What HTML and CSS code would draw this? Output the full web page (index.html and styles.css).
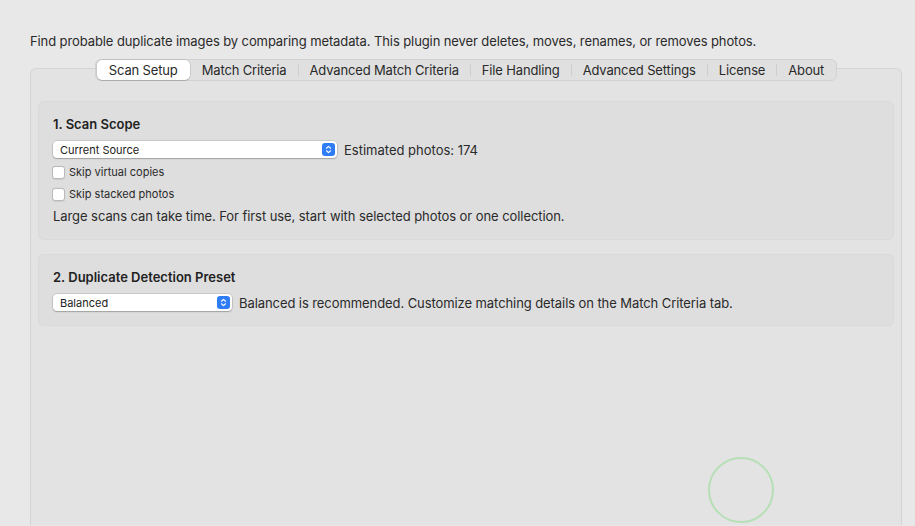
FILE: index.html
```html
<!DOCTYPE html>
<html lang="en">
<head>
    <meta charset="UTF-8">
    <meta name="viewport" content="width=device-width, initial-scale=1.0">
    <title>Duplicate Finder</title>
    <link rel="stylesheet" href="styles.css">
</head>
<body>
    <p class="intro">Find probable duplicate images by comparing metadata. This plugin never deletes, moves, renames, or removes photos.</p>
    <div class="tabview">
        <div class="tabs">
            <span class="tab active">Scan Setup</span>
            <span class="tab">Match Criteria</span>
            <span class="sep"></span>
            <span class="tab">Advanced Match Criteria</span>
            <span class="sep"></span>
            <span class="tab">File Handling</span>
            <span class="sep"></span>
            <span class="tab">Advanced Settings</span>
            <span class="sep"></span>
            <span class="tab">License</span>
            <span class="sep"></span>
            <span class="tab">About</span>
        </div>
        <div class="panel">
            <div class="group">
                <h3>1. Scan Scope</h3>
                <div class="row">
                    <div class="popup wide">
                        <span>Current Source</span>
                        <span class="stepper">
                            <svg width="13" height="13" viewBox="0 0 13 13"><path d="M4.5 5.2 6.5 3.4 8.5 5.2M4.5 7.8 6.5 9.6 8.5 7.8" fill="none" stroke="#fff" stroke-width="1.2" stroke-linecap="round" stroke-linejoin="round"/></svg>
                        </span>
                    </div>
                    <span class="note count">Estimated photos: 174</span>
                </div>
                <label class="check"><span class="box"></span>Skip virtual copies</label>
                <label class="check"><span class="box"></span>Skip stacked photos</label>
                <p class="hint">Large scans can take time. For first use, start with selected photos or one collection.</p>
            </div>
            <div class="group">
                <h3>2. Duplicate Detection Preset</h3>
                <div class="row">
                    <div class="popup narrow">
                        <span>Balanced</span>
                        <span class="stepper">
                            <svg width="13" height="13" viewBox="0 0 13 13"><path d="M4.5 5.2 6.5 3.4 8.5 5.2M4.5 7.8 6.5 9.6 8.5 7.8" fill="none" stroke="#fff" stroke-width="1.2" stroke-linecap="round" stroke-linejoin="round"/></svg>
                        </span>
                    </div>
                    <span class="note">Balanced is recommended. Customize matching details on the Match Criteria tab.</span>
                </div>
            </div>
        </div>
    </div>
    <div class="click-ring"></div>
</body>
</html>
```

FILE: styles.css
```css
body {
    margin: 0;
    background-color: #e8e8e8;
    font-family: Inter, "Liberation Sans", sans-serif;
    font-size: 13px;
    color: #2a2a2a;
    height: 526px;
    overflow: hidden;
    position: relative;
}
.intro {
    margin: 0;
    padding: 33px 0 0 30px;
    line-height: 17px;
    letter-spacing: -0.1px;
}
.tabview {
    margin: 9px 13px 0 30px;
}
.tabs {
    display: flex;
    align-items: center;
    width: max-content;
    margin: 0 auto;
    height: 20px;
    padding: 0 1px;
    background-color: #e0e0e0;
    border: 1px solid #d2d2d2;
    border-radius: 6px;
    position: relative;
    z-index: 1;
    letter-spacing: -0.15px;
}
.tab {
    padding: 0 11px;
    line-height: 20px;
}
.tab.active {
    background-color: #fff;
    border-radius: 5px;
    padding: 0 12px;
    height: 20px;
    box-shadow: 0 0 0 0.5px rgba(0, 0, 0, 0.18), 0 1px 1px rgba(0, 0, 0, 0.1);
    margin-right: 1px;
}
.sep {
    width: 1px;
    height: 12px;
    background-color: #cfcfcf;
}
.panel {
    margin-top: -13px;
    height: 424px;
    padding: 32px 7px 0;
    background-color: #e3e3e3;
    border: 1px solid #d4d4d4;
    border-bottom: 0;
    border-radius: 6px 6px 0 0;
}
.group {
    background-color: #dedede;
    border: 1px solid #d9d9d9;
    border-radius: 6px;
    padding: 14px;
    margin-bottom: 14px;
}
.group h3 {
    margin: 0 0 8px;
    font-size: 13px;
    font-weight: 600;
    line-height: 17px;
    color: #222;
}
.row {
    display: flex;
    align-items: center;
    gap: 7px;
}
.popup {
    display: flex;
    align-items: center;
    justify-content: space-between;
    height: 17px;
    box-sizing: border-box;
    padding: 0 2px 0 7px;
    background-color: #fff;
    border-radius: 4px;
    box-shadow: 0 0 0 0.5px rgba(0, 0, 0, 0.2), 0 1px 1.5px rgba(0, 0, 0, 0.2);
    font-size: 11px;
    color: #222;
}
.popup.wide {
    width: 284px;
}
.popup.narrow {
    width: 179px;
}
.stepper {
    width: 13px;
    height: 13px;
    border-radius: 3px;
    background-color: #2e7cf6;
    display: flex;
}
.note {
    letter-spacing: -0.08px;
}
.note.count {
    letter-spacing: 0;
}
.check {
    display: flex;
    align-items: center;
    gap: 4px;
    font-size: 11px;
    margin: 6px 0 0 -1px;
    height: 16px;
}
.check .box {
    width: 11px;
    height: 11px;
    background-color: #fff;
    border: 0.5px solid #b9b9b9;
    border-radius: 3px;
    box-shadow: 0 0.5px 1px rgba(0, 0, 0, 0.08);
}
.hint {
    margin: 6px 0 0;
    line-height: 17px;
    letter-spacing: -0.07px;
}
.click-ring {
    position: absolute;
    left: 708px;
    top: 457px;
    width: 62px;
    height: 62px;
    border: 2px solid #b6dfb6;
    border-radius: 50%;
}
```
